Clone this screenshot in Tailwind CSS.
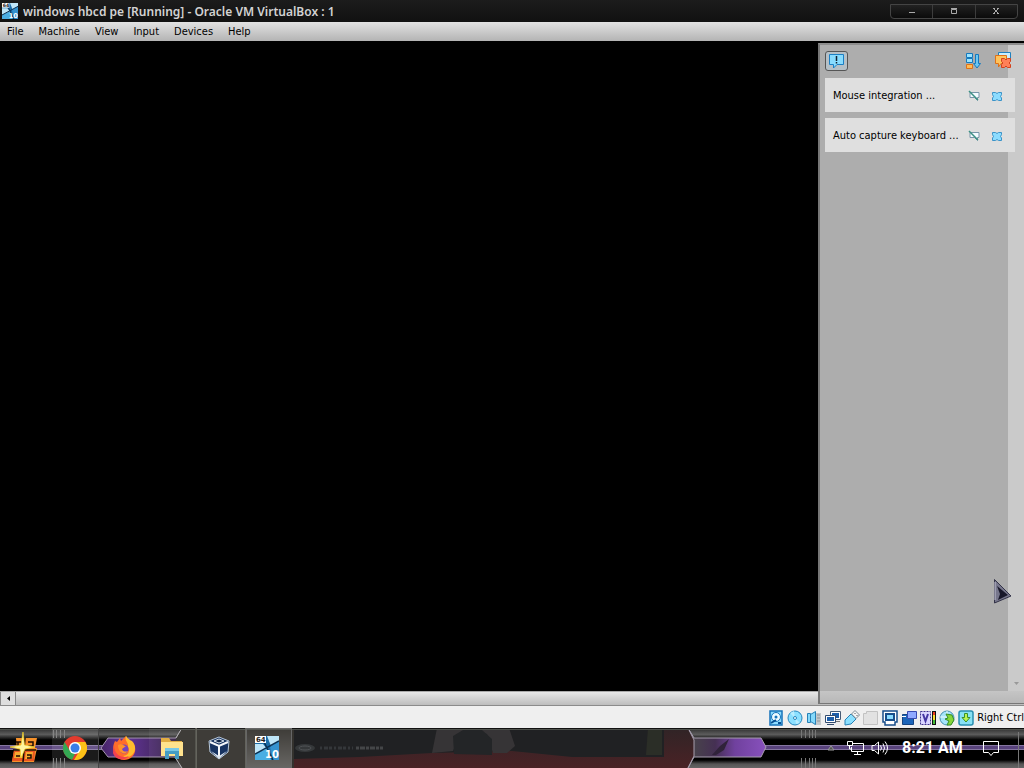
<!DOCTYPE html>
<html lang="en">
<head>
<meta charset="utf-8">
<title>windows hbcd pe [Running] - Oracle VM VirtualBox : 1</title>
<script src="https://cdn.jsdelivr.net/npm/@tailwindcss/browser@4"></script>
</head>
<body class="flex h-screen flex-col overflow-hidden bg-black font-['DejaVu_Sans_Condensed','Noto_Sans',sans-serif] text-[11px] leading-4 text-black">

<svg class="hidden" aria-hidden="true">
  <symbol id="vm" viewBox="0 0 24 24">
    <path fill="#1c6ea9" d="M0 0h24v24H0z"/>
    <path fill="#bfe6f8" d="M0 8h8l4 5-12 5zM12 0h12v5l-8 5z"/>
    <path fill="#4aaee3" d="M0 18l12-5 4 11H0z"/>
    <path fill="#3592cf" d="M15 11l9-6v19h-6z"/>
    <path stroke="#0a3154" stroke-width="1.500" d="M8 4l10 20M24 5L0 18"/>
    <path fill="#fff" d="M0 0h11v7H0z"/>
    <text x="1" y="6" font-family="DejaVu Sans" font-size="7" font-weight="700" fill="#222">64</text>
    <text x="10" y="22" font-family="DejaVu Sans" font-size="10" font-weight="700" fill="#fff">10</text>
  </symbol>
  <symbol id="pin" viewBox="0 0 12 12">
    <path fill="#f4fbff" stroke="#7896a8" d="M2 2.500h9v5H9.500v3l-3-3H2z"/>
    <path stroke="#3c9083" stroke-width="1.500" d="M1 1l9 9"/>
  </symbol>
  <symbol id="cross" viewBox="0 0 12 12">
    <path fill="#8bdcff" stroke="#3a93c8" stroke-linejoin="round" d="M1.500 2.500h3L6 3.500l1.500-1h3v2L9.500 6.500l1 1.500v2.500h-3L6 9.500l-1.500 1h-3V8l1-1.500-1-2z"/>
  </symbol>
</svg>

<header class="flex h-[22px] shrink-0 items-center bg-linear-to-b from-[#1c1c1c] to-[#111] pr-1.5 pl-0.5">
  <svg class="size-4 shrink-0" aria-hidden="true"><use href="#vm"/></svg>
  <h1 class="ml-[5px] grow truncate pt-0.5 font-['Noto_Sans',sans-serif] text-[12px] font-semibold text-[#d2d2d2]">windows hbcd pe [Running] - Oracle VM VirtualBox : 1</h1>
  <div class="flex h-[15px] w-32 overflow-hidden rounded-b-sm border border-[#444] bg-linear-to-b from-[#222] to-[#0b0b0b]">
    <button class="flex flex-1 items-center justify-center border-r border-[#3c3c3c]" aria-label="Minimize"><svg class="size-2" viewBox="0 0 8 8"><path stroke="#aaa" d="M1 5.500h6"/></svg></button>
    <button class="flex flex-1 items-center justify-center border-r border-[#3c3c3c]" aria-label="Maximize"><svg class="size-2" viewBox="0 0 8 8"><path fill="none" stroke="#aaa" d="M1.500 2.500h5v4h-5zM1 1.500h6"/></svg></button>
    <button class="flex flex-1 items-center justify-center" aria-label="Close"><svg class="size-2" viewBox="0 0 8 8"><path stroke="#aaa" d="M1.500 1.500l5 5M6.500 1.500l-5 5M1 1.500h2M5 1.500h2M1 6.500h2M5 6.500h2"/></svg></button>
  </div>
</header>

<nav class="flex h-[19px] shrink-0 items-center gap-[15px] bg-linear-to-b from-[#e2e2e2] to-[#b4b4b4] pl-[7px]" aria-label="Menu">
  <button>File</button><button>Machine</button><button>View</button><button>Input</button><button>Devices</button><button>Help</button>
</nav>

<main class="relative flex min-h-0 grow flex-col">
  <section class="grow bg-black" aria-label="Guest display"></section>
  <div class="flex h-[15px] shrink-0 border-y border-t-[#aaa] border-b-[#8b8b8b] bg-linear-to-b from-[#e8e8e8] via-[#d2d2d2] to-[#bdbdbd]">
    <button class="flex w-4 items-center justify-center border-x border-[#888] bg-[#dedede]" aria-label="Scroll left"><svg class="h-[5px] w-[3px]" viewBox="0 0 3 5"><path d="M3 0v5L0 2.500z"/></svg></button>
  </div>

  <aside class="absolute top-0.5 right-0 bottom-0.5 flex w-[206px] border-t-2 border-b border-l-2 border-t-[#8d8d8d] border-b-[#777] border-l-[#777] bg-[#adadad]" aria-label="Notifications">
    <div class="absolute inset-y-0 right-0 flex w-4 flex-col justify-end bg-[#cacaca]"><svg class="mx-auto mb-[18px] h-[3px] w-[5px]" viewBox="0 0 5 3"><path fill="#999" d="M0 0h5L2.500 3z"/></svg></div>
    <div class="absolute inset-x-0 bottom-0 h-3 bg-linear-to-b from-[#c5c5c5] to-[#b8b8b8]"></div>
    <div class="relative flex grow flex-col gap-1.5 pt-1.5 pr-[9px] pl-[5px]">
      <div class="flex h-[21px] items-start">
        <button aria-label="Show all notifications" class="flex h-5 w-[23px] items-center justify-center rounded-[3px] border border-[#555] bg-[#b5c0c7]">
          <svg class="size-[18px]" viewBox="0 0 18 18"><path fill="#88dcff" stroke="#1b7fc4" stroke-linejoin="round" d="M1.500 2.500h14v10H9L5.500 16v-3.500h-4z"/><path stroke="#123" stroke-width="1.500" d="M8.500 4v5M8.500 10v1.500"/></svg>
        </button>
        <button aria-label="Sort notifications" class="ml-auto pt-0.5"><svg class="size-4" viewBox="0 0 16 16"><path fill="#9be4ff" stroke="#1679bd" d="M1.500.500h6v4h-6zM1.500 5.500h6v4h-6z"/><path fill="#ffbd54" stroke="#df7118" d="M1.500 11.500h6v4h-6z"/><path fill="#6cc8f3" stroke="#1679bd" d="M10.500 1.500h3v9h2L12 15l-3.500-4.500h2z"/></svg></button>
        <button aria-label="Dismiss all notifications" class="mr-[3px] ml-[13px]"><svg class="size-[18px]" viewBox="0 0 18 18"><path fill="#c8eeff" stroke="#2080bd" d="M4.500 1.500h12v8h-12z"/><path fill="#ffc35c" stroke="#df7118" stroke-linejoin="round" d="M1.500 4.500h11v8H7L4.500 16v-3.500h-3z"/><path fill="#ff8057" stroke="#d3421c" stroke-linejoin="round" d="M7.500 7.500h3L12 9l1.500-1.500h3v3L15 12l1.500 1.500v3h-3L12 15l-1.500 1.500h-3v-3L9 12l-1.500-1.500z"/></svg></button>
      </div>
      <article class="flex h-[34px] items-center bg-[#dfdfdf] pt-0.5 pr-3 pl-2">
        <h2 class="grow whitespace-nowrap">Mouse integration ...</h2>
        <button aria-label="Suppress mouse message"><svg class="size-3"><use href="#pin"/></svg></button>
        <button aria-label="Close mouse message" class="ml-[11px]"><svg class="size-3"><use href="#cross"/></svg></button>
      </article>
      <article class="flex h-[34px] items-center bg-[#dfdfdf] pt-0.5 pr-3 pl-2">
        <h2 class="grow whitespace-nowrap">Auto capture keyboard ...</h2>
        <button aria-label="Suppress keyboard message"><svg class="size-3"><use href="#pin"/></svg></button>
        <button aria-label="Close keyboard message" class="ml-[11px]"><svg class="size-3"><use href="#cross"/></svg></button>
      </article>
    </div>
  </aside>
  <svg class="absolute right-3 bottom-[102px] h-[26px] w-[19px]" viewBox="0 0 19 26" aria-hidden="true"><path fill="#77778c" stroke="#343449" d="M1.500 1.500L18 18 1.500 25z"/><path fill="#18182a" d="M4 8l11 9-10 5 2-6z"/><path stroke="#c4c4d4" d="M2 4v18"/></svg>
</main>

<footer class="flex h-[22px] shrink-0 items-center justify-end gap-[3px] bg-[#efefef] pt-0.5">
  <button aria-label="Hard disks"><svg class="size-4" viewBox="0 0 16 16"><path fill="#8ddcff" stroke="#1673bb" stroke-width="1.500" d="M2 1h12v14H2z"/><circle cx="8" cy="7" r="4.500" fill="#edfaff" stroke="#1673bb"/><circle cx="8" cy="7" r="1.500" fill="#1673bb"/><path stroke="#074e91" stroke-width="2" d="M3 13l5-3M10 13h3"/></svg></button>
  <button aria-label="Optical drives"><svg class="size-4" viewBox="0 0 16 16"><circle cx="8" cy="8" r="7" fill="#8be0ff" stroke="#2686bd"/><path fill="#b8edff" d="M8 8L3 3l4-2zM8 8l5 5-4 1z"/><circle cx="8" cy="8" r="1.500" fill="#fff" stroke="#2686bd"/></svg></button>
  <button aria-label="Audio"><svg class="size-4" viewBox="0 0 16 16"><path fill="#c3c7c9" d="M9 3h6v12H8z"/><path stroke="#8f9598" d="M11 5h3M11 8h3M11 11h3"/><path fill="#85d9fa" stroke="#2781b6" d="M1.500 3.500h3v9h-3zM4.500 4.500l5-3v13l-5-3z"/></svg></button>
  <button aria-label="Network"><svg class="size-4" viewBox="0 0 16 16"><path fill="#fff" stroke="#475b75" d="M5.500 1.500h10v8h-10z"/><path fill="#1d5eaa" d="M7 3h7v5H7z"/><path stroke="#777" d="M11 11.500h4"/><path fill="#fff" stroke="#334c6e" d="M.500 5.500h10v7H.500z"/><path fill="#1d5eaa" d="M2 7h7v4H2z"/><path stroke="#334c6e" d="M2 14.500h7"/></svg></button>
  <button aria-label="USB devices"><svg class="size-4" viewBox="0 0 16 16"><path fill="#8be0ff" stroke="#2781b6" d="M1 15V10l6-6 5 5-5 5z"/><path fill="#f5f5f5" stroke="#7f8b94" d="M7.500 4L11 .500 15.500 5 12 8.500z"/><path stroke="#555" d="M11 3v1M13 5v1"/></svg></button>
  <button aria-label="Shared folders"><svg class="size-4" viewBox="0 0 16 16"><path fill="#e2e2e2" stroke="#c2c2c2" d="M.500 3.500h3v-2h11v13H.500z"/></svg></button>
  <button aria-label="Display"><svg class="size-4" viewBox="0 0 16 16"><path fill="#fff" stroke="#174e8b" stroke-width="1.500" d="M1 1h14v11h-2v3H3v-3H1z"/><path fill="#8bdcff" stroke="#174e8b" stroke-width="2" d="M4 4h8v6H4z"/></svg></button>
  <button aria-label="Recording"><svg class="size-4" viewBox="0 0 16 16"><path fill="#1c65b9" stroke="#154481" d="M1.500 4.500h11v10h-11z"/><path stroke="#fff" d="M1 6.500h4"/><path fill="#8fa9ff" stroke="#384ab0" d="M6.500 1.500h9v7h-9z"/></svg></button>
  <button aria-label="Virtualization features"><svg class="size-4" viewBox="0 0 16 16"><path fill="#d9d5ff" stroke="#3e338d" stroke-dasharray="2 1" d="M.500 1.500h10v13H.500z"/><path fill="none" stroke="#4436a2" stroke-width="2" d="M3 4l2.500 7L8 4"/><path fill="#111" d="M12 1h4v14h-4z"/><path fill="#ef3d23" d="M13 2h2v4h-2z"/><path fill="#fadb2f" d="M13 5h2v5h-2z"/><path fill="#43bb36" d="M13 10h2v4h-2z"/></svg></button>
  <button aria-label="Mouse integration"><svg class="size-4" viewBox="0 0 16 16"><circle cx="8" cy="8" r="7" fill="#a5e4fb" stroke="#4591b3"/><path stroke="#eefaff" d="M8 1v6M1 7h7"/><path fill="#85d63b" stroke="#348b26" d="M7 4l6 1 2 5-3 5H8l2-4-4-2 3-1z"/></svg></button>
  <button aria-label="Host key state"><svg class="size-4" viewBox="0 0 16 16"><rect x="1" y="1" width="14" height="14" rx="2" fill="#87e0f4" stroke="#288eb1" stroke-width="1.500"/><path fill="#baf34f" stroke="#37902c" d="M6.500 3.500h3v4H12l-4 4.500-4-4.500h2.500z"/></svg></button>
  <span class="whitespace-nowrap">Right Ctrl</span>
</footer>

<footer class="relative flex h-10 shrink-0 bg-black" aria-label="Taskbar">
  <svg class="absolute inset-0 size-full" viewBox="0 0 1024 40" preserveAspectRatio="none" aria-hidden="true">
    <defs>
      <linearGradient id="top" x2="0" y2="1"><stop stop-color="#333"/><stop offset="1" stop-color="#777"/></linearGradient>
      <linearGradient id="shade" x2="0" y2="1"><stop stop-color="#2c2c2c"/><stop offset=".16" stop-color="#5c5c5c"/><stop offset=".3" stop-color="#000"/><stop offset=".8" stop-color="#000"/><stop offset=".9" stop-color="#555"/><stop offset="1" stop-color="#666"/></linearGradient>
      <linearGradient id="purple"><stop stop-color="#462465"/><stop offset=".3" stop-color="#63349a"/><stop offset="1" stop-color="#302039"/></linearGradient>
      <linearGradient id="violet"><stop stop-color="#494849"/><stop offset=".35" stop-color="#453053"/><stop offset=".6" stop-color="#70419e"/><stop offset="1" stop-color="#8851bd"/></linearGradient>
      <linearGradient id="red" x2="0" y2="1"><stop stop-color="#302426"/><stop offset="1" stop-color="#4a2225"/></linearGradient>
    </defs>
    <path fill="url(#shade)" d="M0 0h1024v40H0z"/>
    <path fill="#59437d" d="M0 17h1024v5H0z"/><path stroke="#8575a0" d="M0 17.500h1024M0 21.500h1024"/>
    <path fill="url(#purple)" stroke="#a395ae" d="M101 20l7-10h68l6-10v40l-7-11h-67z"/>
    <path fill="#34322e" d="M176 11l6-11h112v40H182l-7-11z"/>
    <path fill="none" stroke="#aaa" d="M182 0l-6 10M182 40l-7-11"/>
    <path fill="#202123" d="M294 0h394l6 12v17l-6 11H294z"/>
    <path fill="url(#red)" d="M294 31l66-2 72-4 80-2 60 6h92V0h24l6 12v17l-6 11H294z"/>
    <path fill="#363436" d="M437 0h72l6 18-8 7h-14l-6-19-14-4-15 9-5 12-21 2z"/>
    <path fill="#232527" d="M453 8l10-6h19l10 9v16l-38-1z"/><path fill="#2b2e27" d="M648 0h14v27h-16z"/>
    <ellipse cx="305" cy="20" rx="10" ry="4" fill="#35383a"/><ellipse cx="305" cy="20" rx="6" ry="2" fill="none" stroke="#505356"/>
    <path stroke="#34373a" stroke-width="3" stroke-dasharray="2 2 4 1 3 2" d="M320 20h33"/><path stroke="#444648" stroke-width="3" stroke-dasharray="3 1 5 1" d="M356 20h27"/>
    <path fill="url(#violet)" stroke="#a79eae" d="M688 0l6 10h67l5 9-5 10h-67l-6 11 6-12V12z"/>
    <path fill="#30233a" d="M712 27l8-9 9-7-5 11-8 5z"/>
    <path stroke="#777" d="M53.500 0v10M56.500 0v10M60.500 0v10M64.500 0v10M53.500 30v10M56.500 30v10M60.500 30v10M64.500 30v10M801.500 0v10M805.500 0v10M809.500 0v10M812.500 0v10M815.500 0v10M801.500 30v10M805.500 30v10M809.500 30v10M812.500 30v10M815.500 30v10M1018.500 4v36"/>
    <path stroke="#4e514c" d="M0 1.500h1024"/>
    <path stroke="#111" d="M0 .500h1024"/>
  </svg>
  <div class="relative flex">
    <button class="flex w-[52px] items-center justify-center pr-1" aria-label="Start">
      <svg class="h-8 w-8" viewBox="0 0 32 32"><path fill="#f5912a" d="M8 6h21l-2 10h2l-3 14H4l2-12h3z"/><path fill="#ea5520" d="M6 19h21l-1 10H4z"/><path fill="#f9a92f" d="M7 20h8v6H6zM18 20h7l-1 7h-7z"/><path fill="none" stroke="#1b0c05" stroke-width="1.500" d="M17 6l-2 24M5 18h23M20 10h5v4h-5M8 24h4M19 23h4v3h-4M10 10v5M8 10h6"/><path fill="#fff6a0" stroke="#f2cd21" stroke-width=".7" d="M15 0l1.500 13L27 15l-10 2-4 9-1-9-10-2 11-2z"/></svg>
    </button>
    <button class="flex w-[47px] items-center justify-center border-r border-[#444] bg-white/10" aria-label="Google Chrome">
      <svg class="size-6" viewBox="0 0 24 24"><circle cx="12" cy="12" r="12" fill="#e33b2e"/><path fill="#34a853" d="M1.600 6L7 15l5 3-3 5.700A12 12 0 0 1 1.600 6z"/><path fill="#fbc116" d="M12 6h10.400A12 12 0 0 1 11 24l6-10z"/><circle cx="12" cy="12" r="6" fill="#fff"/><circle cx="12" cy="12" r="4.500" fill="#397ee8"/></svg>
    </button>
    <button class="flex w-[50px] items-center justify-center" aria-label="Firefox">
      <svg class="size-6" viewBox="0 0 24 24"><path fill="#ff6d2b" d="M3 5l2 1 3-4 1 3 5-5 3 5 5 3c4 8-2 16-10 16C4 24-2 15 3 5z"/><path fill="#ffbd2d" d="M14 0c-2 5 3 6 2 11 3 5-1 9-5 9 5 4 13-2 12-9-1-5-3-6-5-7-1-1-3-2-4-4z"/><path fill="#f24150" d="M2 9c0 10 8 14 15 11-4 5-13 5-16-3z"/><circle cx="12" cy="13" r="4.500" fill="#7444be"/><path fill="#ff922b" d="M6 9c4-2 5 1 8 1l-4 3c1 3 4 3 6 2-3 5-10 2-10-6z"/></svg>
    </button>
    <button class="flex w-[47px] items-center justify-center border-r border-[#55554f] bg-white/5" aria-label="File Explorer">
      <svg class="size-6" viewBox="0 0 24 24"><path fill="#e2ad43" d="M1 2h8l2 3h11v15H1z"/><path fill="#ffe28d" d="M1 6h22v14H1z"/><path fill="#459dc5" d="M5 12h14v11h-4v-5H9v5H5z"/><path fill="#79c8e6" d="M5 12h14v3H5z"/></svg>
    </button>
    <button class="flex w-[50px] items-center justify-center border-x border-[#64645d] bg-white/5 pr-1" aria-label="VirtualBox">
      <svg class="size-6" viewBox="0 0 24 24"><path fill="#173361" stroke="#b9c9da" stroke-linejoin="round" d="M12 1l10 4-1 11-9 7-9-7L2 5z"/><path fill="none" stroke="#f4f7fa" stroke-width="2" d="M3 6l9 4 9-4M12 10v12"/><path fill="#0c2246" stroke="#dbe5ef" d="M7 5l5-2 5 2-5 2z"/><path fill="#dbe5ef" d="M4 15l8 5 8-5-8 8z"/></svg>
    </button>
    <button class="flex w-[46px] items-center justify-center border border-[#666] bg-linear-to-b from-white/5 to-white/25 pr-1" aria-label="windows hbcd pe">
      <svg class="size-6"><use href="#vm"/></svg>
    </button>
  </div>
  <div class="relative ml-auto flex items-center pr-6 text-white">
    <button aria-label="Show hidden icons" class="mr-3"><svg class="h-1.5 w-2" viewBox="0 0 8 6"><path fill="#555" stroke="#999" d="M1 5l3-4 3 4z"/></svg></button>
    <button aria-label="Network connection" class="mr-[7px]"><svg class="h-4 w-[17px]" viewBox="0 0 17 16" fill="none" stroke="#fff"><path d="M6 3.500h10.500v8H4.500V7M10.500 12v2M7 14.500h7M.500 1.500h5v4h-5zM2.500 6v3h2"/></svg></button>
    <button aria-label="Volume" class="mr-3.5"><svg class="h-4 w-[17px]" viewBox="0 0 17 16" fill="none" stroke="#fff"><path d="M1 5.500h2.500L7.500 2v12l-4-3.500H1zM9.500 5.500q2 2.500 0 5M12 3.500q3 4.500 0 9M14 1.500q5 6.500 0 13"/></svg></button>
    <time class="w-[58px] text-center font-['Roboto',sans-serif] text-[16px] leading-6 font-bold whitespace-nowrap">8:21 AM</time>
    <button aria-label="Notifications" class="ml-[22px]"><svg class="h-[17px] w-[18px]" viewBox="0 0 18 17"><path fill="none" stroke="#fff" d="M1.500 1.500h15v11h-5L9 15.500 6.500 12.500h-5z"/></svg></button>
  </div>
</footer>
</body>
</html>
